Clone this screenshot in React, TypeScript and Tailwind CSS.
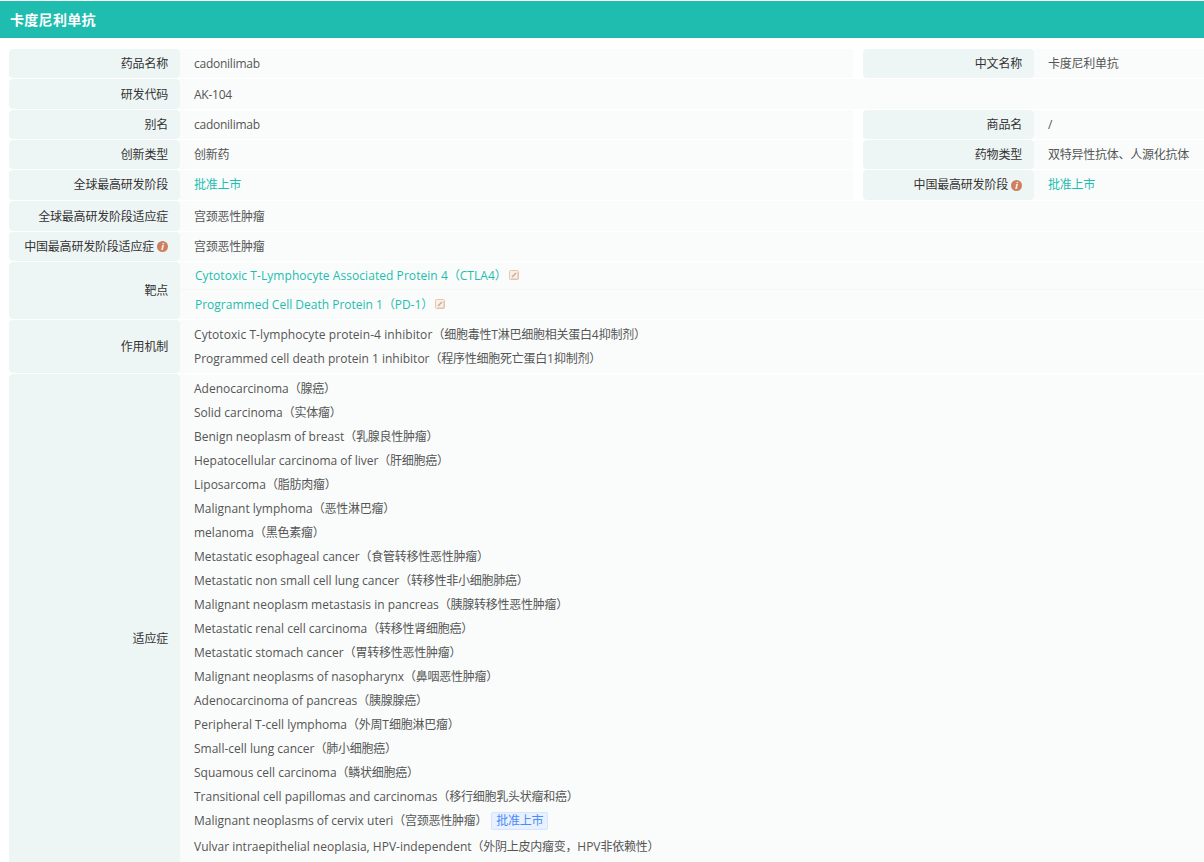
import React from 'react';

const font = "font-['Open_Sans','Noto_Sans_CJK_SC',sans-serif]";

const InfoIcon = () => (
  <span className="inline-flex items-center justify-center w-[11px] h-[11px] rounded-full bg-[#cd7f5e] text-white text-[9px] leading-none font-bold italic ml-[3px]">i</span>
);

const LinkIcon = () => (
  <svg width="10" height="10" viewBox="0 0 10 10" className="ml-[2px] mb-[2px]" fill="none">
    <rect x="0.5" y="0.5" width="9" height="9" rx="1" fill="#f8efe9" stroke="#e6c6b2" />
    <path d="M9 2v7H2" stroke="#e2bfa9" strokeWidth="1" />
    <path d="M3 7l4-4" stroke="#d3a288" strokeWidth="1.2" />
  </svg>
);

// chinese runs sit a bit tighter than the 12px em box
const Mixed = ({ text }: { text: string }) => (
  <>
    {text.split(/([\u3000-\u9fff\uff00-\uffef]+)/).map((part, i) =>
      i % 2 ? <span key={i} className="tracking-[-0.25px]">{part}</span> : part
    )}
  </>
);

const Label = ({ children, pt = '' }: { children: React.ReactNode; pt?: string }) => (
  <div className={`w-[171px] shrink-0 bg-[#eef6f5] rounded-[4px] pr-[12px] flex items-center justify-end text-[#333] whitespace-nowrap tracking-[-0.2px] ${pt}`}>{children}</div>
);

const Row = ({ label, value, h = 'h-[30px]', label2, value2, pt = '' }: any) => (
  <div className={`flex ${h} mb-px`}>
    <Label pt={pt}>{label}</Label>
    <div className={`flex-1 min-w-0 bg-[#fafcfb] pl-[14px] flex items-center text-[#555] whitespace-nowrap tracking-[-0.25px] ${pt}`}>{value}</div>
    {label2 && (
      <>
        <div className="w-[10px] shrink-0 bg-white" />
        <Label>{label2}</Label>
        <div className="w-[170px] shrink-0 bg-[#fafcfb] pl-[14px] flex items-center text-[#555] whitespace-nowrap tracking-[-0.25px]">{value2}</div>
      </>
    )}
  </div>
);

const indications = [
  'Adenocarcinoma（腺癌）',
  'Solid carcinoma（实体瘤）',
  'Benign neoplasm of breast（乳腺良性肿瘤）',
  'Hepatocellular carcinoma of liver（肝细胞癌）',
  'Liposarcoma（脂肪肉瘤）',
  'Malignant lymphoma（恶性淋巴瘤）',
  'melanoma（黑色素瘤）',
  'Metastatic esophageal cancer（食管转移性恶性肿瘤）',
  'Metastatic non small cell lung cancer（转移性非小细胞肺癌）',
  'Malignant neoplasm metastasis in pancreas（胰腺转移性恶性肿瘤）',
  'Metastatic renal cell carcinoma（转移性肾细胞癌）',
  'Metastatic stomach cancer（胃转移性恶性肿瘤）',
  'Malignant neoplasms of nasopharynx（鼻咽恶性肿瘤）',
  'Adenocarcinoma of pancreas（胰腺腺癌）',
  'Peripheral T-cell lymphoma（外周T细胞淋巴瘤）',
  'Small-cell lung cancer（肺小细胞癌）',
  'Squamous cell carcinoma（鳞状细胞癌）',
  'Transitional cell papillomas and carcinomas（移行细胞乳头状瘤和癌）',
];

const Approved = () => <span className="text-[#1fbdaf]">批准上市</span>;

export default function App() {
  return (
    <div className={`w-[1204px] h-[862px] overflow-hidden bg-white text-[12px] ${font}`}>
      <div className="mt-px h-[37px] bg-[#1fbdaf] pl-[10px] flex items-center text-white text-[14px] font-bold tracking-[0.3px]">卡度尼利单抗</div>
      <div className="pt-[11px] pl-[9px]">
        <Row label="药品名称" value="cadonilimab" label2="中文名称" value2="卡度尼利单抗" h="h-[29px]" />
        <Row label="研发代码" value="AK-104" pt="pt-px" />
        <Row label="别名" value="cadonilimab" label2="商品名" value2="/" h="h-[29px]" />
        <Row label="创新类型" value="创新药" label2="药物类型" value2="双特异性抗体、人源化抗体" h="h-[29px]" />
        <Row label="全球最高研发阶段" value={<Approved />} label2={<>中国最高研发阶段<InfoIcon /></>} value2={<Approved />} />
        <Row label="全球最高研发阶段适应症" value="宫颈恶性肿瘤" pt="pt-px" />
        <Row label={<>中国最高研发阶段适应症<InfoIcon /></>} value="宫颈恶性肿瘤" h="h-[29px]" />
        <div className="flex mb-px h-[57px]">
          <Label pt="pt-px">靶点</Label>
          <div className="flex-1 bg-[#fafcfb]">
            <div className="h-[28px] pl-[15px] flex items-center text-[#1fbdaf] border-b border-[#f4f7f6] tracking-[0.06px]"><Mixed text="Cytotoxic T-Lymphocyte Associated Protein 4（CTLA4）" /><LinkIcon /></div>
            <div className="h-[29px] pl-[15px] flex items-center text-[#1fbdaf]"><Mixed text="Programmed Cell Death Protein 1（PD-1）" /><LinkIcon /></div>
          </div>
        </div>
        <div className="flex mb-px h-[53px]">
          <Label pt="pt-px">作用机制</Label>
          <div className="flex-1 bg-[#fafcfb] pl-[14px] pt-[3px] text-[#555] leading-[24px]">
            <div className="tracking-[0.07px]"><Mixed text="Cytotoxic T-lymphocyte protein-4 inhibitor（细胞毒性T淋巴细胞相关蛋白4抑制剂）" /></div>
            <div><Mixed text="Programmed cell death protein 1 inhibitor（程序性细胞死亡蛋白1抑制剂）" /></div>
          </div>
        </div>
        <div className="flex h-[528px]">
          <Label pt="pt-[2px]">适应症</Label>
          <div className="flex-1 bg-[#fafcfb] pl-[14px] pt-[3px] text-[#555] leading-[24px]">
            {indications.map(t => <div key={t}><Mixed text={t} /></div>)}
            <div className="flex items-center">
              <span><Mixed text="Malignant neoplasms of cervix uteri（宫颈恶性肿瘤）" /></span>
              <span className="ml-[4px] h-[18px] px-[4px] leading-[16px] bg-[#e8f1ff] border border-[#d6e4ff] rounded-[2px] text-[#4d8cf5] tracking-[-0.25px]">批准上市</span>
            </div>
            <div className="mt-[2px]"><Mixed text="Vulvar intraepithelial neoplasia, HPV-independent（外阴上皮内瘤变，HPV非依赖性）" /></div>
          </div>
        </div>
      </div>
    </div>
  );
}
